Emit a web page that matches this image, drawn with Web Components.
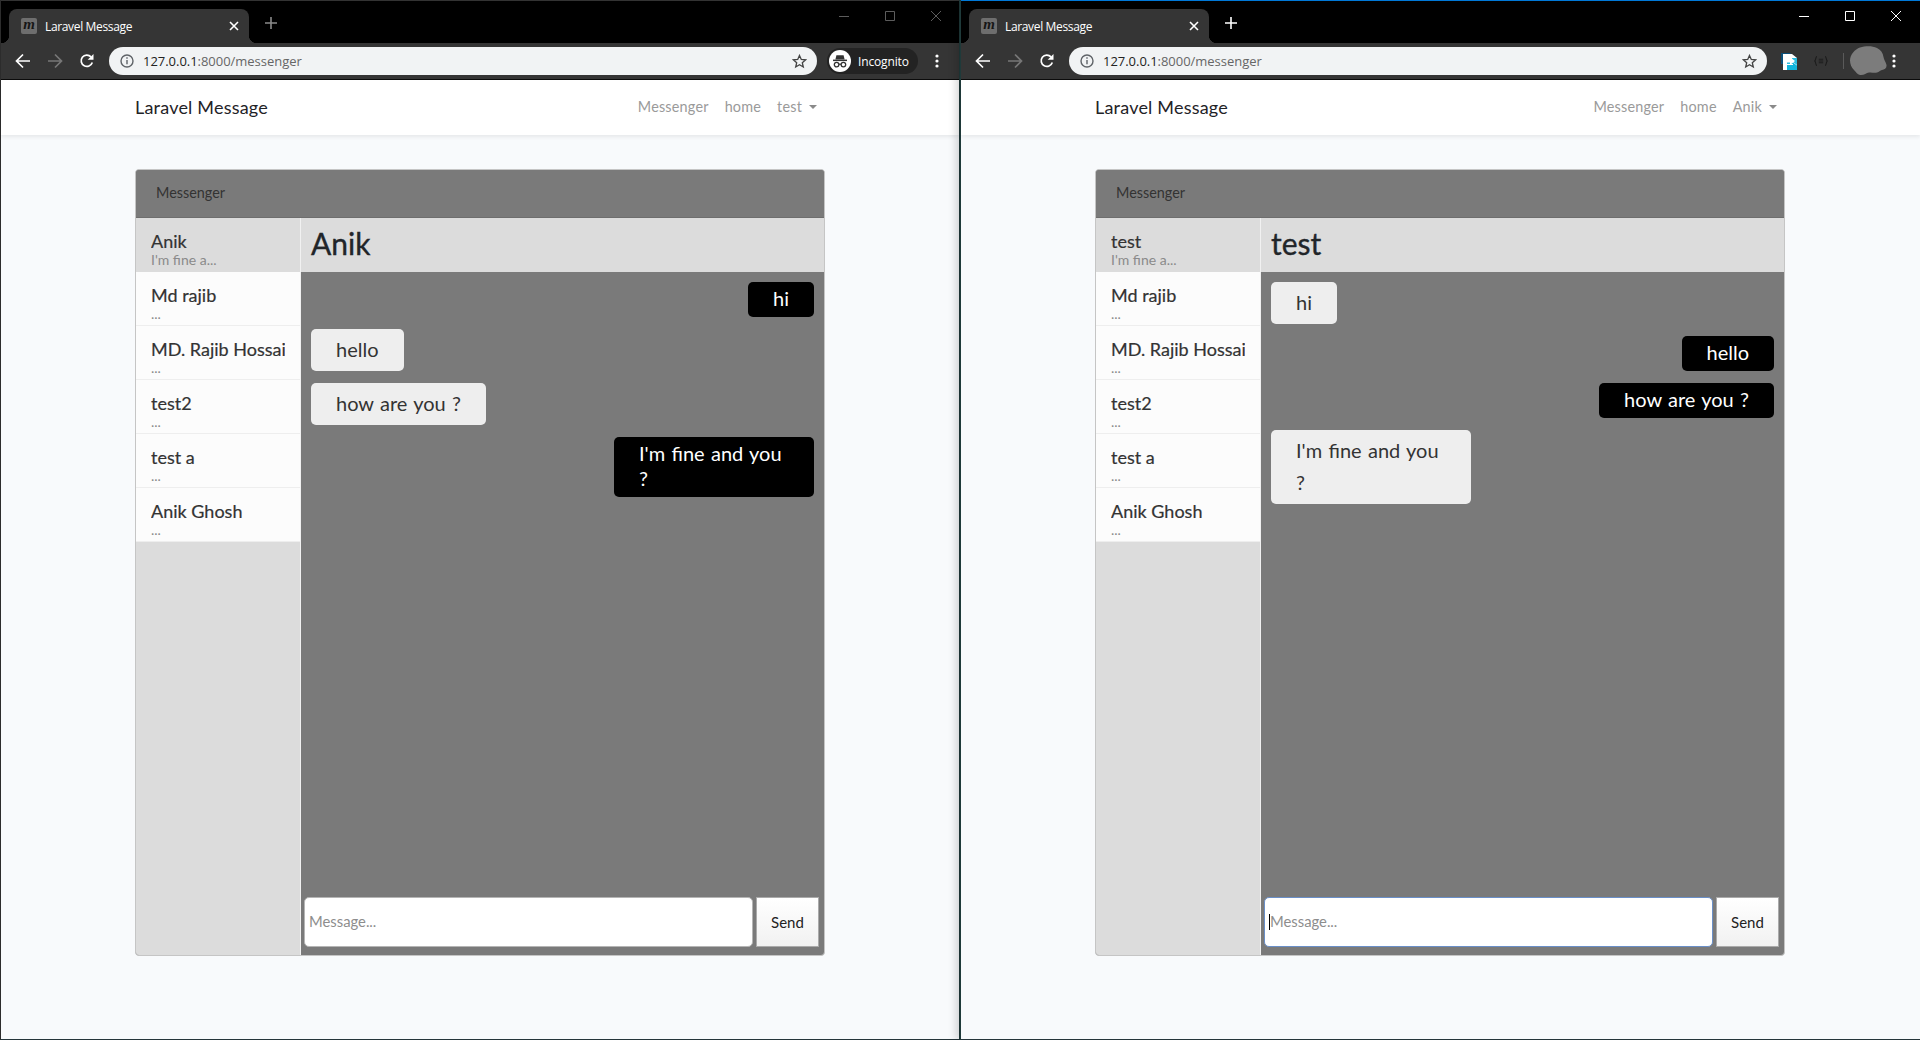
<!DOCTYPE html>
<html lang="en">
<head>
<meta charset="utf-8">
<title>Laravel Message</title>
<style>
html, body { margin: 0; padding: 0; height: 1040px; overflow: hidden; background: #f8fafc; }
body { display: flex; font-family: "Lato", "Noto Sans", sans-serif; }
</style>
</head>
<body>
<browser-window url="127.0.0.1:8000/messenger" user="test" incognito>
    <messenger-card peer="Anik" preview="I'm fine a...">
        <chat-bubble mine>hi</chat-bubble>
        <chat-bubble>hello</chat-bubble>
        <chat-bubble>how are you ?</chat-bubble>
        <chat-bubble mine>I'm fine and you ?</chat-bubble>
    </messenger-card>
</browser-window>
<browser-window url="127.0.0.1:8000/messenger" user="Anik" active>
    <messenger-card peer="test" preview="I'm fine a..." focused>
        <chat-bubble>hi</chat-bubble>
        <chat-bubble mine>hello</chat-bubble>
        <chat-bubble mine>how are you ?</chat-bubble>
        <chat-bubble>I'm fine and you ?</chat-bubble>
    </messenger-card>
</browser-window>

<script>
'use strict';
(function () {
    class BrowserChrome extends HTMLElement {
        connectedCallback() {
            const active = this.hasAttribute('active');
            const incognito = this.hasAttribute('incognito');
            const ctl = active ? '#fff' : '#5c5c5c';
            const trailing = incognito ? `
                <div class="pill">
                    <svg width="22" height="22" viewBox="0 0 22 22">
                        <circle cx="11" cy="11" r="11" fill="#fff"/>
                        <path d="M7.4 5.2h7.2l1 4.2H6.4z" fill="#333"/>
                        <rect x="4" y="9.6" width="14" height="1.5" fill="#333"/>
                        <circle cx="7.6" cy="14.6" r="2.3" fill="none" stroke="#333" stroke-width="1.3"/>
                        <circle cx="14.4" cy="14.6" r="2.3" fill="none" stroke="#333" stroke-width="1.3"/>
                        <path d="M9.9 14.2h2.2" stroke="#333" stroke-width="1.2"/>
                    </svg>
                    <span>Incognito</span>
                </div>` : `
                <div class="exts">
                    <svg width="16" height="17" viewBox="0 0 16 17">
                        <path d="M0 0h9l5 4v1H5v6H0z" fill="#0b4f78"/>
                        <path d="M2 1h9l5 4v12H2z" fill="#fff"/>
                        <path d="M6 17V12h6V9.500l4 3V17z" fill="#12b5dc"/>
                        <path d="M11 5h5v7l-4-3v2H6v-2h5z" fill="#12b5dc" opacity=".9"/>
                        <path d="M3 6.500h6V4l5 4-5 4V9.500H3z" fill="#fff"/>
                    </svg>
                    <svg class="sens" width="14" height="10" viewBox="0 0 14 10" fill="none" stroke="#1c1c1c" stroke-width="1.1">
                        <path d="M3 .5C1.500.5 2 4 .8 5 2 6 1.500 9.500 3 9.500M11 .5c1.500 0 1 3.500 2.200 4.500C12 6 12.500 9.500 11 9.500M4.800 3.300h4.400M4.800 5h4.400M4.800 6.700h4.400"/>
                    </svg>
                    <i class="sep"></i>
                    <svg class="blob" width="37" height="30" viewBox="0 0 37 30">
                        <path d="M10 1.500C15 0 22-.5 27 2c4 2 6 5 6.500 9 .3 3 2.500 5 3 8 .4 3-2 4.500-4.500 5-2 .4-3 2-5 2.500-3 .8-5-.5-8 0-3 .500-5 3-9 2.500-3-.4-4-3-6-5C1.500 21.500 0 18 0 14.500 0 9 5 3 10 1.500z" fill="#7c7c7c"/>
                    </svg>
                </div>`;
            const shadow = this.attachShadow({mode: 'open'});
            shadow.innerHTML = `
<style>
:host { display: block; background: #000; font-family: "Open Sans", "Noto Sans", sans-serif; }
.strip { display: flex; height: 42px; padding-left: 8px; border-top: 1px solid ${active ? '#0078d7' : '#333'}; }
.tab {
    position: relative;
    align-self: flex-end;
    display: flex;
    align-items: center;
    width: 240px;
    height: 34px;
    box-sizing: border-box;
    padding: 0 10px 0 12px;
    border-radius: 8px 8px 0 0;
    background: #353535;
    color: #fff;
    font-size: 12px;
}
.tab::before, .tab::after {
    content: "";
    position: absolute;
    bottom: 0;
    width: 8px;
    height: 8px;
}
.tab::before { left: -8px; background: radial-gradient(circle at 0 0, transparent 8px, #353535 8.5px); }
.tab::after { right: -8px; background: radial-gradient(circle at 100% 0, transparent 8px, #353535 8.5px); }
.fav {
    width: 16px;
    height: 16px;
    margin-right: 8px;
    border-radius: 2px;
    background: #6e6e6e;
    color: #161616;
    font: italic bold 15px/13px "Liberation Serif", serif;
    text-align: center;
}
.title { flex: 1; letter-spacing: -.35px; }
.plus { align-self: center; margin: 2px 0 0 16px; }
.controls { display: flex; margin-left: auto; margin-right: ${active ? 1 : 0}px; }
.controls div { display: flex; align-items: center; justify-content: center; width: 46px; height: 29px; }
.bar {
    display: flex;
    align-items: center;
    height: 36px;
    padding-left: 6px;
    background: #353535;
    border-bottom: 1px solid #0c0c0c;
}
.btn { display: flex; align-items: center; justify-content: center; width: 32px; height: 32px; flex: none; }
.omni {
    flex: 1;
    display: flex;
    align-items: center;
    height: 28px;
    margin-left: 6px;
    padding: 0 10px 0 11px;
    border-radius: 14px;
    background: #f1f3f4;
    color: #666;
    font-size: 13px;
}
.omni b { font-weight: 400; color: #222; }
.url { flex: 1; margin-left: 9px; letter-spacing: -.03px; }
.trail { display: flex; align-items: center; flex: none; width: ${incognito ? 142 : 153}px; box-sizing: border-box; }
.pill {
    display: flex;
    align-items: center;
    width: 91px;
    height: 26px;
    margin-left: 10px;
    box-sizing: border-box;
    padding-left: 2px;
    border-radius: 13px;
    background: #232323;
    color: #fff;
    font-size: 12px;
    letter-spacing: -.15px;
}
.pill span { margin-left: 7px; }
.exts { display: flex; align-items: center; margin-left: 14px; }
.exts .sens { margin-left: 17px; }
.sep { width: 1px; height: 16px; margin-left: 15px; background: #5a5a5a; }
.exts .blob { margin-left: 6px; }
.dots { margin-left: ${incognito ? 17 : 5}px; }
</style>
<div class="strip">
    <div class="tab">
        <span class="fav">m</span>
        <span class="title">Laravel Message</span>
        <svg width="10" height="10" viewBox="0 0 10 10" stroke="#fff" stroke-width="1.600"><path d="M1 1l8 8M9 1l-8 8"/></svg>
    </div>
    <svg class="plus" width="12" height="12" viewBox="0 0 12 12" stroke="${active ? '#fff' : '#8a8a8a'}" stroke-width="1.600"><path d="M6 0v12M0 6h12"/></svg>
    <div class="controls">
        <div><svg width="10" height="10" viewBox="0 0 10 10" stroke="${ctl}"><path d="M0 5.500h10"/></svg></div>
        <div><svg width="10" height="10" viewBox="0 0 10 10" stroke="${ctl}" fill="none"><path d="M.5.500h9v9h-9z"/></svg></div>
        <div><svg width="10" height="10" viewBox="0 0 10 10" stroke="${ctl}"><path d="M0 0l10 10M10 0L0 10"/></svg></div>
    </div>
</div>
<div class="bar">
    <div class="btn"><svg width="16" height="16" viewBox="0 0 16 16" fill="none" stroke="#fff" stroke-width="1.700"><path d="M15 8H2M8 1.500L1.500 8 8 14.500"/></svg></div>
    <div class="btn"><svg width="16" height="16" viewBox="0 0 16 16" fill="none" stroke="#777" stroke-width="1.700"><path d="M1 8h13M8 1.500L14.500 8 8 14.500"/></svg></div>
    <div class="btn"><svg width="16" height="16" viewBox="0 0 16 16" fill="none" stroke="#fff" stroke-width="1.700"><path d="M13.300 9.500A5.700 5.700 0 1 1 12 3.800"/><path d="M14.500 1v5.800H8.700z" fill="#fff" stroke="none"/></svg></div>
    <div class="omni">
        <svg width="14" height="14" viewBox="0 0 14 14" fill="none" stroke="#5f6368" stroke-width="1.400"><circle cx="7" cy="7" r="6"/><path d="M7 6v4.200M7 3.300v1.500"/></svg>
        <span class="url"><b>127.0.0.1</b>:8000/messenger</span>
        <svg width="15" height="15" viewBox="0 0 15 15" fill="none" stroke="#444" stroke-width="1.300"><path d="M7.500 1.400l1.800 4 4.300.4-3.300 2.900 1 4.300-3.800-2.300-3.800 2.300 1-4.300L1.400 5.800l4.300-.4z"/></svg>
    </div>
    <div class="trail">
        ${trailing}
        <svg class="dots" width="4" height="14" viewBox="0 0 4 14" fill="#fff"><circle cx="2" cy="2" r="1.600"/><circle cx="2" cy="7" r="1.600"/><circle cx="2" cy="12" r="1.600"/></svg>
    </div>
</div>`;
        }
    }

    class SiteNav extends HTMLElement {
        connectedCallback() {
            const shadow = this.attachShadow({mode: 'open'});
            shadow.innerHTML = `
<style>
:host {
    display: block;
    position: relative;
    height: 55px;
    background: #fff;
    box-shadow: 0 2px 4px rgba(0,0,0,.075);
}
.inner { display: flex; align-items: center; width: 690px; height: 100%; margin-left: 134px; }
.brand { padding-bottom: 2px; font-size: 18px; color: #1f2327; letter-spacing: .2px; }
.links { display: flex; align-items: center; gap: 16px; margin-left: auto; padding: 0 8px 2px 0; font-size: 14.400px; color: #9a9a9a; letter-spacing: .2px; }
.caret { display: inline-block; width: 0; height: 0; margin-left: 7px; vertical-align: 3px; border: 4.500px solid transparent; border-top-color: #8a8a8a; border-bottom: 0; }
</style>
<div class="inner">
    <span class="brand">Laravel Message</span>
    <div class="links">
        <span>Messenger</span>
        <span>home</span>
        <span>${this.getAttribute('user')}<i class="caret"></i></span>
    </div>
</div>`;
        }
    }

    class ContactRow extends HTMLElement {
        connectedCallback() {
            const shadow = this.attachShadow({mode: 'open'});
            shadow.innerHTML = `
<style>
:host {
    display: block;
    height: 54px;
    box-sizing: border-box;
    padding: 13px 15px 0 15px;
    background: #fcfcfc;
    border-bottom: 1px solid #eee;
}
:host([active]) { background: #dcdcdc; border-bottom-color: #dcdcdc; }
.name { overflow: hidden; white-space: nowrap; font-size: 18px; line-height: 21px; color: #333; -webkit-text-stroke: .2px #333; }
.sub { overflow: hidden; white-space: nowrap; font-size: 14px; line-height: 15px; color: #8a8a8a; }
</style>
<div class="name">${this.getAttribute('name')}</div>
<div class="sub">${this.getAttribute('sub') || '...'}</div>`;
        }
    }

    class ChatBubble extends HTMLElement {
        connectedCallback() {
            const shadow = this.attachShadow({mode: 'open'});
            shadow.innerHTML = `
<style>
:host {
    display: block;
    align-self: flex-start;
    box-sizing: border-box;
    max-width: 200px;
    padding: 4px 25px 6px;
    border-radius: 5px;
    background: #eee;
    color: #333;
    font-size: 20px;
    line-height: 32px;
    word-spacing: 1.200px;
}
:host([mine]) { align-self: flex-end; background: #000; color: #fff; line-height: 25px; }
</style>
<slot></slot>`;
        }
    }

    class ChatComposer extends HTMLElement {
        connectedCallback() {
            const focused = this.hasAttribute('focused');
            const shadow = this.attachShadow({mode: 'open'});
            shadow.innerHTML = `
<style>
:host { display: flex; gap: 3px; height: 50px; padding: 0 5px 8px 3px; }
.box { position: relative; flex: 1; display: flex; }
input {
    flex: 1;
    width: 100%;
    box-sizing: border-box;
    padding: 0 4px 2px;
    border: 1px solid #b5b5b5;
    border-radius: 5px;
    background: #fff;
    outline: none;
    font: 14.800px "Lato", "Noto Sans", sans-serif;
}
input::placeholder { color: #8d8d8d; opacity: 1; }
:host([focused]) input { border: 1.500px solid #6a8fc8; padding-left: 5px; }
.cursor { position: absolute; left: 5px; top: 17px; width: 1px; height: 16px; background: #000; }
button {
    width: 63px;
    padding: 0;
    border: 1px solid #aaa;
    background: linear-gradient(#fff, #f1f1f1);
    color: #222;
    font: 15px "Lato", "Noto Sans", sans-serif;
}
</style>
<div class="box">
    <input type="text" placeholder="Message...">
    ${focused ? '<span class="cursor"></span>' : ''}
</div>
<button>Send</button>`;
        }
    }

    class MessengerCard extends HTMLElement {
        connectedCallback() {
            const peer = this.getAttribute('peer');
            const preview = this.getAttribute('preview');
            const focused = this.hasAttribute('focused') ? 'focused' : '';
            const shadow = this.attachShadow({mode: 'open'});
            shadow.innerHTML = `
<style>
:host {
    display: flex;
    flex-direction: column;
    width: 690px;
    height: 787px;
    box-sizing: border-box;
    margin: 34px 0 0 134px;
    border: 1px solid #c5c5c5;
    border-radius: 4px;
    overflow: hidden;
    background: #7a7a7a;
}
.head { height: 48px; flex: none; box-sizing: border-box; padding: 13px 20px 0; background: #7a7a7a; border-bottom: 1px solid #6e6e6e; color: #333; font-size: 14.400px; line-height: 20px; }
.main { flex: 1; display: flex; min-height: 0; }
.side { width: 164px; flex: none; background: #dcdcdc; border-right: 1px solid #f1f1f1; }
.chat { flex: 1; display: flex; flex-direction: column; min-width: 0; }
.peer { height: 54px; flex: none; box-sizing: border-box; padding-left: 10px; background: #dcdcdc; color: #212529; font-size: 30px; line-height: 50px; -webkit-text-stroke: .35px #212529; }
.log { flex: 1; display: flex; flex-direction: column; gap: 12px; padding: 10px; }
</style>
<div class="head">Messenger</div>
<div class="main">
    <div class="side">
        <contact-row active name="${peer}" sub="${preview}"></contact-row>
        <contact-row name="Md rajib"></contact-row>
        <contact-row name="MD. Rajib Hossain"></contact-row>
        <contact-row name="test2"></contact-row>
        <contact-row name="test a"></contact-row>
        <contact-row name="Anik Ghosh"></contact-row>
    </div>
    <div class="chat">
        <div class="peer">${peer}</div>
        <div class="log"><slot></slot></div>
        <chat-composer ${focused}></chat-composer>
    </div>
</div>`;
        }
    }

    class BrowserWindow extends HTMLElement {
        connectedCallback() {
            const active = this.hasAttribute('active') ? 'active' : '';
            const incognito = this.hasAttribute('incognito') ? 'incognito' : '';
            const shadow = this.attachShadow({mode: 'open'});
            shadow.innerHTML = `
<style>
:host {
    display: block;
    position: relative;
    width: 960px;
    height: 1040px;
    box-sizing: border-box;
    border-left: 1px solid #1f3a3a;
    border-bottom: 1px solid #25353a;
    background: #f8fafc;
}
:host([active]) { box-shadow: -4px 0 8px rgba(0,0,0,.16); }
:host(:not([active])) { border-left-color: #2c2c2c; border-right: 1px solid #1f3a3a; }
</style>
<browser-chrome ${active} ${incognito}></browser-chrome>
<site-nav user="${this.getAttribute('user')}"></site-nav>
<slot></slot>`;
        }
    }

    window.customElements.define('browser-chrome', BrowserChrome);
    window.customElements.define('site-nav', SiteNav);
    window.customElements.define('contact-row', ContactRow);
    window.customElements.define('chat-bubble', ChatBubble);
    window.customElements.define('chat-composer', ChatComposer);
    window.customElements.define('messenger-card', MessengerCard);
    window.customElements.define('browser-window', BrowserWindow);
})();
</script>
</body>
</html>
